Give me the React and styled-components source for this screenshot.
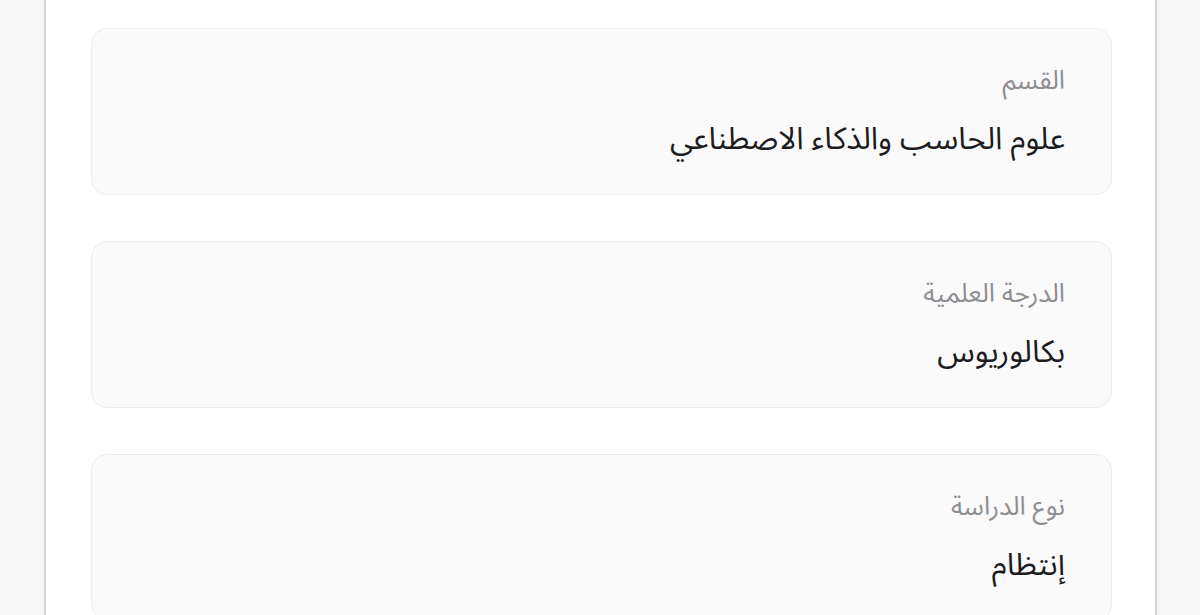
import styled, { createGlobalStyle } from "styled-components";

const GlobalStyle = createGlobalStyle`
  html, body {
    margin: 0;
    padding: 0;
    background: #f6f6f6;
  }
  body {
    font-family: "Noto Sans Arabic", "DejaVu Sans", "Noto Sans", sans-serif;
  }
`;

const Page = styled.div`
  padding: 0 43px 0 44px;
  height: 615px;
  overflow: hidden;
`;

const Panel = styled.main`
  background: #ffffff;
  border-left: 2px solid #d4d4d8;
  border-right: 2px solid #d4d4d8;
  min-height: 615px;
  padding: 28px 43px 0 45px;
  display: flex;
  flex-direction: column;
  gap: 46px;
`;

const Card = styled.section`
  direction: rtl;
  height: 167px;
  box-sizing: border-box;
  background: #fafafa;
  border: 1px solid #ededed;
  border-radius: 16px;
  padding: 37px 46px 0 46px;
  display: flex;
  flex-direction: column;
  gap: 23px;
`;

const Label = styled.div`
  font-size: 26px;
  line-height: 30px;
  color: #8e8e93;
`;

const Value = styled.div`
  font-size: 31px;
  line-height: 40px;
  color: #1c1c1e;
`;

const fields = [
  { label: "القسم", value: "علوم الحاسب والذكاء الاصطناعي" },
  { label: "الدرجة العلمية", value: "بكالوريوس" },
  { label: "نوع الدراسة", value: "إنتظام" },
];

const App = () => {
  return (
    <>
      <GlobalStyle />
      <Page>
        <Panel>
          {fields.map((f) => (
            <Card key={f.label}>
              <Label>{f.label}</Label>
              <Value>{f.value}</Value>
            </Card>
          ))}
        </Panel>
      </Page>
    </>
  );
};

export default App;
